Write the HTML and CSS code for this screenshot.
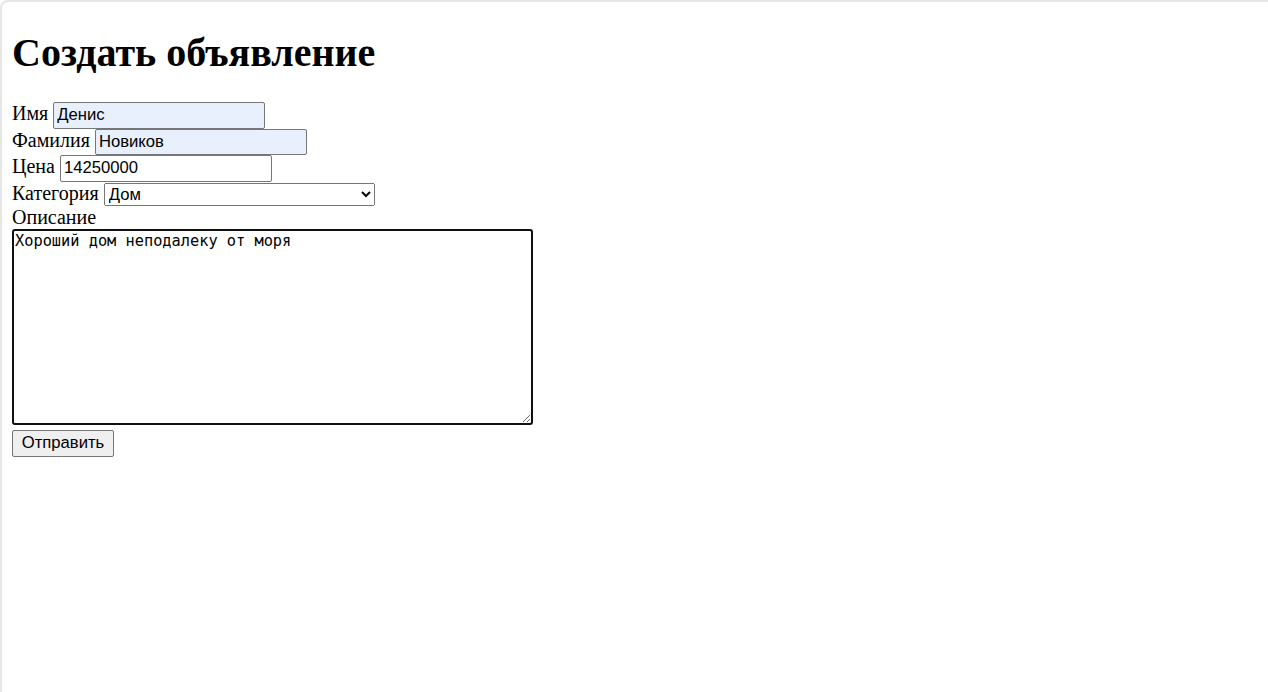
FILE: index.html
```html
<!DOCTYPE html>
<html>
<head>
    <meta charset="utf-8">
    <title>Создать объявление</title>
    <link rel="stylesheet" href="styles.css">
</head>
<body>
    <div class="frame">
        <h1>Создать объявление</h1>
        <form id="adForm">
            <label>Имя <input type="text" class="field autofill" name="name" value="Денис"></label><br>
            <label>Фамилия <input type="text" class="field autofill" name="surname" value="Новиков"></label><br>
            <label>Цена <input type="text" class="field" name="price" value="14250000"></label><br>
            <label>Категория <select class="category" name="category">
                <option value="house" selected>Дом</option>
                <option value="flat">Квартира</option>
                <option value="car">Автомобиль</option>
            </select></label><br>
            <label>Описание</label><br>
            <textarea class="description" name="description">Хороший дом неподалеку от моря</textarea><br>
            <input type="submit" class="send" value="Отправить">
        </form>
    </div>
</body>
</html>
```

FILE: styles.css
```css
html, body {
    margin: 0;
    padding: 0;
    background: #fff;
}
.frame {
    min-height: 100vh;
    box-sizing: border-box;
    padding: 0 10px;
    border-top: 2px solid #e6e6e6;
    border-left: 2px solid #e6e6e6;
    border-top-left-radius: 8px;
    font-family: "Liberation Serif", "Times New Roman", serif;
    font-size: 20px;
    color: #000;
}
h1 {
    font-size: 40px;
    margin: 27px 0 26px;
}
.field {
    box-sizing: border-box;
    width: 212px;
    height: 26.5px;
    padding: 2px 3px;
    border: 1px solid #767676;
    border-radius: 2px;
    font-family: "Liberation Sans", Arial, sans-serif;
    font-size: 16.67px;
    color: #000;
    background: #fff;
}
.autofill {
    background: #e8f0fe;
}
.category {
    box-sizing: border-box;
    width: 271px;
    height: 23px;
    font-family: "Liberation Sans", Arial, sans-serif;
    font-size: 16.67px;
    color: #000;
}
.description {
    box-sizing: border-box;
    width: 521px;
    height: 196px;
    padding: 1px 1px;
    border: 2px solid #101010;
    border-radius: 3px;
    outline: none;
    font-family: "DejaVu Sans Mono", monospace;
    font-size: 15.3px;
    color: #000;
    vertical-align: baseline;
}
.send {
    box-sizing: border-box;
    width: 102px;
    height: 27px;
    border: 1px solid #767676;
    border-radius: 2px;
    background: #efefef;
    font-family: "Liberation Sans", Arial, sans-serif;
    font-size: 16.67px;
    color: #000;
}
```
